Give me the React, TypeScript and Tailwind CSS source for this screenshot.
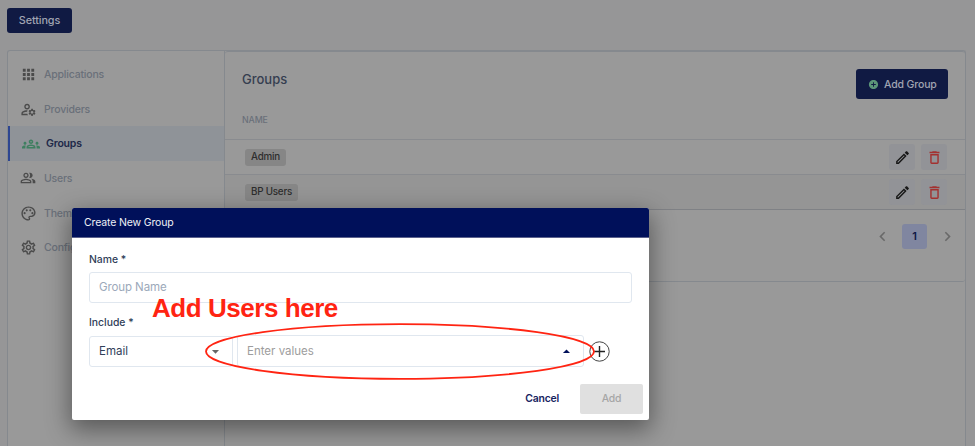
import type { ReactNode } from 'react';
import {
  MdApps,
  MdOutlineManageAccounts,
  MdOutlineGroups,
  MdOutlinePeopleAlt,
  MdOutlinePalette,
  MdOutlineSettings,
  MdOutlineEdit,
  MdDeleteOutline,
  MdAddCircle,
  MdChevronLeft,
  MdChevronRight,
  MdArrowDropDown,
  MdArrowDropUp,
} from 'react-icons/md';

function NavItem({ icon, label, active = false }: { icon: ReactNode; label: string; active?: boolean }) {
  return (
    <div
      className={
        active
          ? 'flex h-[34.7px] items-center border-l-2 border-[#2e4691] bg-[#8f9398] pl-[12px] text-[10.5px] font-semibold tracking-[-0.2px] text-[#1d2848]'
          : 'flex h-[34.7px] items-center pl-[12px] text-[10.5px] font-medium tracking-[-0.2px] text-[#6a7079]'
      }
    >
      <span className={active ? 'w-6 text-[#3f7f60]' : 'w-6 text-[#4b4b4b]'}>{icon}</span>
      <span className="pt-px">{label}</span>
    </div>
  );
}

function GroupRow({ name, shaded = false }: { name: string; shaded?: boolean }) {
  return (
    <div
      className={
        shaded
          ? 'flex h-[35px] items-center border-t border-[#898b8f] bg-[#959595] pl-5 pr-[18px]'
          : 'flex h-[35px] items-center border-t border-[#898b8f] pl-5 pr-[18px]'
      }
    >
      <span className="flex h-[17px] items-center rounded-[3px] bg-[#868686] px-[6px] pt-px text-[9.8px] font-medium tracking-[-0.2px] text-[#2d2d2d]">
        {name}
      </span>
      <span className="ml-auto flex gap-[6px]">
        <span className="flex size-[26px] items-center justify-center rounded-[3px] bg-[#929397] text-[#181818]">
          <MdOutlineEdit size={17} />
        </span>
        <span className="flex size-[26px] items-center justify-center rounded-[3px] bg-[#929397] text-[#a33130]">
          <MdDeleteOutline size={17} />
        </span>
      </span>
    </div>
  );
}

function Background() {
  return (
    <div className="flex h-full flex-col pl-[7px] pt-2">
      <div className="flex h-[25px] w-[65px] items-center justify-center rounded-[3px] bg-[#101a43] pt-px text-[10.8px] font-medium tracking-[-0.1px] text-[#a0a4b2]">
        Settings
      </div>
      <div className="mt-[17px] flex w-[959px] grow rounded-t-[3px] border-l border-t border-r border-[#85898e] bg-[#999999]">
        <nav className="w-[216px] pt-[6px]">
          <NavItem icon={<MdApps size={17} />} label="Applications" />
          <NavItem icon={<MdOutlineManageAccounts size={17} />} label="Providers" />
          <NavItem icon={<MdOutlineGroups size={18} />} label="Groups" active />
          <NavItem icon={<MdOutlinePeopleAlt size={16} />} label="Users" />
          <NavItem icon={<MdOutlinePalette size={17} />} label="Themes" />
          <NavItem icon={<MdOutlineSettings size={17} />} label="Configuration" />
        </nav>
        <main className="grow border-l border-[#85898e]">
          <section className="flex h-[231px] flex-col rounded-[3px] border-b border-t border-[#85898e]">
            <div className="flex h-[87px] justify-between pl-[17px] pr-[17px] pt-[17px]">
              <div>
                <h1 className="text-[13px] font-medium leading-[20px] text-[#353e50]">Groups</h1>
                <p className="mt-[25px] text-[8.8px] font-medium leading-3 tracking-[-0.1px] text-[#6a7079]">NAME</p>
              </div>
              <div className="flex h-[30px] w-[92px] items-center rounded-[3px] bg-[#101a43] pl-3 text-[10.5px] font-medium tracking-[-0.15px] text-[#a0a4b2]">
                <MdAddCircle size={11} className="mr-[5px] text-[#5b9579]" />
                <span className="pt-px">Add Group</span>
              </div>
            </div>
            <GroupRow name="Admin" />
            <GroupRow name="BP Users" shaded />
            <div className="flex grow items-start justify-end border-t border-[#7f8185] pr-[8px] pt-[14px]">
              <div className="flex h-[25px] items-center text-[#696969]">
                <MdChevronLeft size={19} />
                <span className="ml-[10px] mr-[11px] flex size-[25px] items-center justify-center rounded-[3px] bg-[#8086a0] text-[11px] font-semibold text-[#0d1644]">
                  1
                </span>
                <MdChevronRight size={19} />
              </div>
            </div>
          </section>
        </main>
      </div>
    </div>
  );
}

function Dialog() {
  return (
    <div className="absolute left-[72px] top-[208px] flex h-[211.5px] w-[577px] flex-col rounded-[2px] bg-white shadow-[0_8px_24px_2px_rgba(0,0,0,0.42)]">
      <header className="flex h-[30px] items-center rounded-t-[2px] border-b border-[#5c628d] bg-[#00105a] pl-3 pt-px text-[10.5px] tracking-[-0.15px] text-[#eef0f6]">
        Create New Group
      </header>
      <div className="flex flex-col pl-[17px] text-[#304059]">
        <label className="mt-[14px] text-[10.4px] font-medium leading-4">Name *</label>
        <div className="mt-[4px] flex h-[31px] w-[543px] items-center rounded-[3px] border border-[#e0e7ef] pl-[9px] pt-px text-[11.5px] tracking-[-0.1px] text-[#9ca9ba]">
          Group Name
        </div>
        <label className="mt-[12px] text-[10.4px] font-medium leading-4">Include *</label>
        <div className="mt-[4px] flex items-center">
          <div className="flex h-[31px] w-[144px] items-center justify-between rounded-[3px] border border-[#e0e7ef] pl-[9px] pr-[8px] text-[11.5px]">
            <span className="pt-px">Email</span>
            <MdArrowDropDown size={17} className="text-[#666666]" />
          </div>
          <div className="ml-[4px] flex h-[32px] w-[347px] items-center justify-between rounded-[3px] border border-[#e0e7ef] pl-[9px] pr-[8px] text-[11.5px] text-[#9d9d9d]">
            <span className="pt-px">Enter values</span>
            <MdArrowDropUp size={17} className="text-[#00105a]" />
          </div>
          <svg className="ml-[5px] size-[21px]" viewBox="0 0 21 21" fill="none">
            <circle cx="10.5" cy="10.5" r="9.7" stroke="#444" strokeWidth="1" />
            <path d="M10.5 5v11M5 10.5h11" stroke="#222" strokeWidth="1.4" />
          </svg>
        </div>
      </div>
      <footer className="mb-[6px] mr-[6px] mt-auto flex items-center justify-end text-[10.4px] font-semibold tracking-[-0.2px]">
        <span className="mr-[21px] text-[#16235f]">Cancel</span>
        <span className="flex h-[30px] w-[63px] items-center justify-center rounded-[2px] bg-[#e0e0e0] font-medium text-[#a6a6a6]">Add</span>
      </footer>
    </div>
  );
}

export default function App() {
  return (
    <div className="relative h-[446px] w-[975px] overflow-hidden bg-[#969697] font-['Inter',sans-serif]">
      <Background />
      <Dialog />
      <div className="absolute left-[152px] top-[292px] whitespace-nowrap font-['Liberation_Sans',Arial,sans-serif] text-[26px] font-bold leading-8 tracking-[-0.45px] text-[#ff2412]">
        Add Users here
      </div>
      <svg className="absolute left-[204px] top-[322px]" width="392" height="60" fill="none">
        <ellipse cx="196" cy="29.5" rx="194" ry="27.3" stroke="#ff2412" strokeWidth="1.8" />
      </svg>
    </div>
  );
}
